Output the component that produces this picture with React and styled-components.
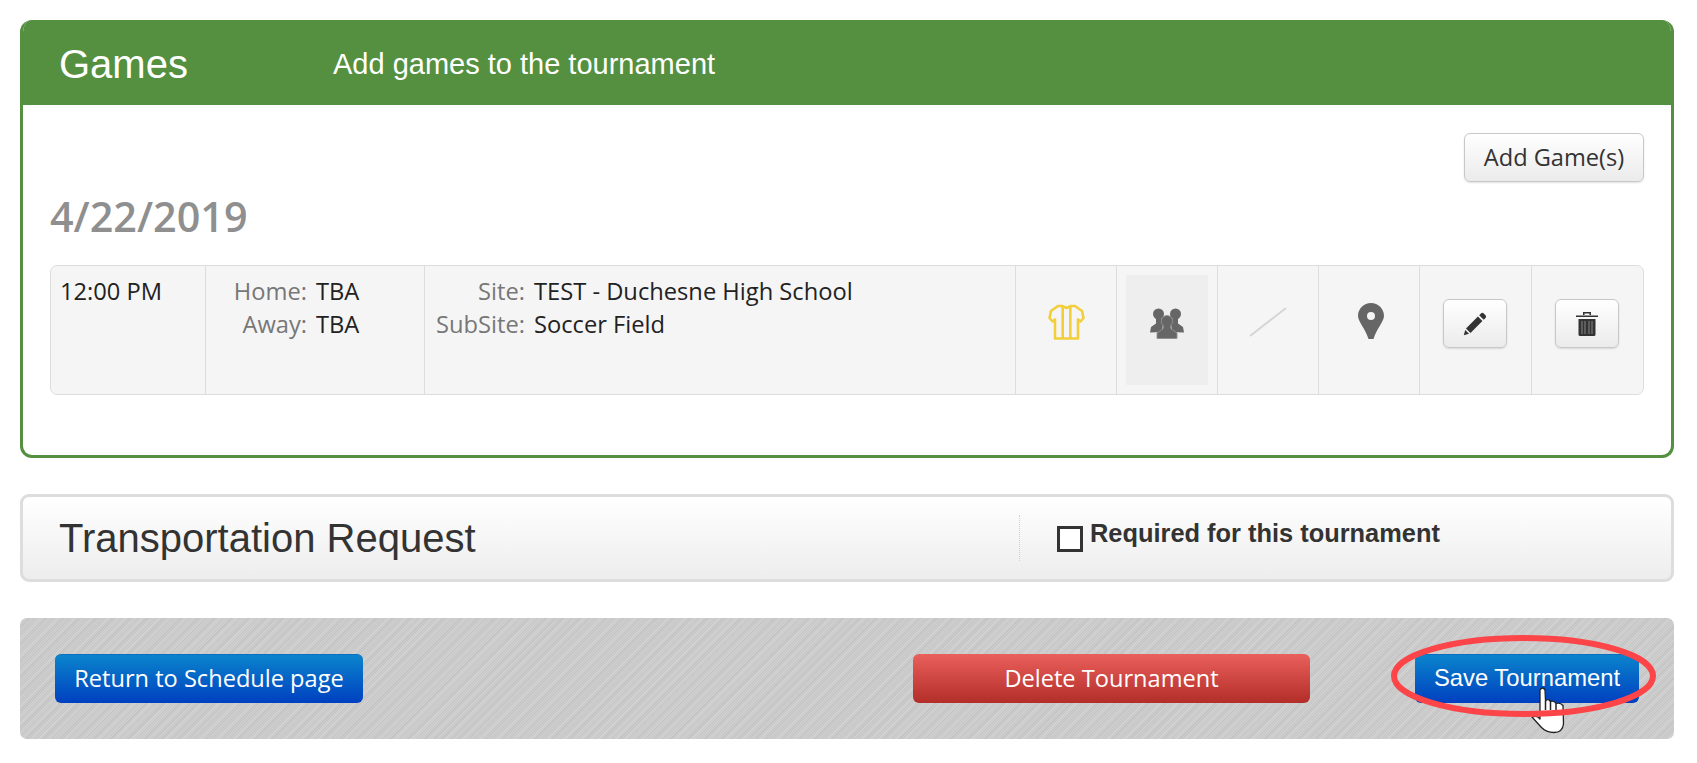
import React from 'react';
import styled, { createGlobalStyle } from 'styled-components';

const GlobalStyle = createGlobalStyle`
    html, body {
        margin: 0;
        padding: 0;
        background: #fff;
        font-family: "Open Sans", sans-serif;
    }
`;

const Page = styled.div`
    width: 1654px;
    padding: 20px 23px 24px 20px;
    display: flex;
    flex-direction: column;
    gap: 36px;
`;

const Panel = styled.section`
    border: 3px solid #54903f;
    border-top: 0;
    border-radius: 12px;
    overflow: hidden;
    height: 438px;
    box-sizing: border-box;
`;

const PanelHeader = styled.header`
    height: 85px;
    box-sizing: border-box;
    margin: 0 -3px;
    padding: 3px 0 0 39px;
    background: #54903f;
    color: #fff;
    display: flex;
    align-items: center;
    font-family: "Liberation Sans", Arial, sans-serif;
`;

const PanelTitle = styled.h2`
    width: 274px;
    margin: 0;
    font-size: 40px;
    font-weight: 400;
`;

const PanelSubtitle = styled.div`
    font-size: 29px;
`;

const PanelBody = styled.div`
    padding: 28px 27px 0 27px;
`;

const Toolbar = styled.div`
    display: flex;
    justify-content: flex-end;
`;

const GrayButton = styled.button`
    box-sizing: border-box;
    width: ${p => p.$width}px;
    height: 49px;
    padding: 0;
    display: flex;
    align-items: center;
    justify-content: center;
    border: 1px solid #c8c8c8;
    border-radius: 6px;
    background: linear-gradient(#ffffff, #ebebeb);
    box-shadow: 0 1px 2px rgba(0, 0, 0, 0.12);
    color: #333;
    font-family: "Open Sans", sans-serif;
    font-size: 23.6px;
`;

const AddButton = styled(GrayButton)`
    padding-bottom: 2px;
`;

const DateHeading = styled.h3`
    margin: 10px 0 25px;
    height: 48px;
    line-height: 48px;
    color: #8f8f8f;
    font-size: 41.3px;
    font-weight: 600;
`;

const GameRow = styled.div`
    height: 130px;
    box-sizing: border-box;
    display: grid;
    grid-template-columns: 155px 219px 591px 101px 101px 101px 101px 112px 1fr;
    background: #f5f5f5;
    border: 1px solid #ddd;
    border-radius: 7px;
    color: #222;
    font-size: 23.7px;
    line-height: 33px;
`;

const Cell = styled.div`
    box-sizing: border-box;
    padding-top: ${p => p.$top || 0}px;
    padding-left: ${p => p.$left || 0}px;
    padding-right: ${p => p.$right || 0}px;
    border-right: ${p => (p.$last ? '0' : '1px solid #ddd')};
    display: flex;
    justify-content: ${p => (p.$center ? 'center' : 'flex-start')};
    align-items: flex-start;
`;

const TimeCell = styled(Cell)`
    padding: 9px 0 0 9px;
`;

const Pairs = styled.div`
    padding-top: 9px;
    display: grid;
    grid-template-columns: ${p => p.$labelWidth}px auto;
    column-gap: 9px;
    align-content: start;
`;

const Label = styled.span`
    color: #777;
    text-align: right;
`;

const Shaded = styled.div`
    width: 82px;
    height: 110px;
    margin: 9px 1px 0 0;
    background: #eee;
    display: flex;
    justify-content: center;
    padding-top: 33px;
    box-sizing: border-box;
`;

const TransportBox = styled.section`
    height: 88px;
    box-sizing: border-box;
    display: flex;
    align-items: center;
    border: 3px solid #ddd;
    border-radius: 9px;
    background: linear-gradient(#ffffff, #ededed);
    color: #333;
    font-family: "Liberation Sans", Arial, sans-serif;
`;

const TransportTitle = styled.h2`
    box-sizing: border-box;
    width: 996px;
    margin: 0;
    padding-left: 36px;
    font-size: 40px;
    font-weight: 400;
`;

const RequiredArea = styled.div`
    height: 46px;
    padding-left: 37px;
    border-left: 1px dotted #cfcfcf;
    display: flex;
    align-items: flex-start;
    gap: 7px;
`;

const CheckBox = styled.span`
    box-sizing: border-box;
    width: 26px;
    height: 26px;
    margin-top: 11px;
    background: #fff;
    border: 3px solid #333;
`;

const RequiredLabel = styled.span`
    font-size: 25.4px;
    font-weight: 700;
    line-height: 32px;
    margin-top: 2px;
`;

const Footer = styled.footer`
    height: 121px;
    box-sizing: border-box;
    padding: 36px 35px;
    display: flex;
    align-items: flex-start;
    border-radius: 7px;
    background:
        repeating-linear-gradient(135deg, rgba(255, 255, 255, 0.07) 0 1px, rgba(0, 0, 0, 0.03) 1px 2px),
        repeating-linear-gradient(135deg, #c8c8c8 0, #d1d1d1 3px, #c8c8c8 6px);
`;

const ColorButton = styled.button`
    box-sizing: border-box;
    width: ${p => p.$width}px;
    height: 49px;
    padding: 0 0 2px;
    border: 0;
    border-radius: 6px;
    color: #fff;
    font-family: "Open Sans", sans-serif;
    font-size: 23.6px;
`;

const BlueButton = styled(ColorButton)`
    background: linear-gradient(#0a84cc, #0040c0);
    border-top: 1px solid #0a6fc0;
`;

const RedButton = styled(ColorButton)`
    margin-left: auto;
    background: linear-gradient(#ea5f5b, #b32e29);
`;

const SaveWrap = styled.div`
    position: relative;
    margin-left: 105px;
`;

const SaveButton = styled(BlueButton)`
    font-family: "Liberation Sans", Arial, sans-serif;
    font-size: 23.8px;
`;

const Ring = styled.svg`
    position: absolute;
    left: -24px;
    top: -19px;
    pointer-events: none;
`;

const HandCursor = styled.svg`
    position: absolute;
    left: 115px;
    top: 32px;
    pointer-events: none;
`;

const Jersey = () => (
    <svg width="37" height="37" viewBox="0 0 37 37" fill="none" stroke="#f2cf3a" strokeWidth="2.600">
        <path d="M7 35.500V16.500L4.500 18.500 1.500 15 3 8 10 3h4l4.500 2 4.500-2h4l7 5 1.500 7-3 3.500-2.500-2v19z" strokeLinejoin="round" />
        <path d="M14.700 3v32.500M22.300 3v32.500" />
    </svg>
);

const People = () => (
    <svg width="34" height="31" viewBox="0 0 34 31" fill="#666">
        <circle cx="8.500" cy="6" r="5.500" />
        <circle cx="25.500" cy="6" r="5.500" />
        <path d="M6 10h5l2 6-1 8-12 0.500 1-5.500 5-3.500zM28 10h-5l-2 6 1 8 12 0.500-1-5.500-5-3.500z" />
        <g stroke="#8e8e8e" strokeWidth="0.900">
            <path d="M17 7.500a5.800 5.800 0 0 1 3.500 10.400l0.500 3 6 4v5.600H7v-5.600l6-4 0.500-3A5.800 5.800 0 0 1 17 7.500z" />
        </g>
    </svg>
);

const Slash = () => (
    <svg width="38" height="30" viewBox="0 0 38 30">
        <path d="M1 29L37 1" stroke="#d6d6d6" strokeWidth="2" />
    </svg>
);

const Pin = () => (
    <svg width="26" height="36" viewBox="0 0 26 36">
        <path fill="#666" fillRule="evenodd" d="M13 0C5.800 0 0 5.800 0 13c0 5.500 7 12 10.500 23h5C19 25 26 18.500 26 13 26 5.800 20.200 0 13 0zm0 9a4 4 0 1 1 0 8 4 4 0 0 1 0-8z" />
    </svg>
);

const Pencil = () => (
    <svg width="24" height="24" viewBox="0 0 24 24" fill="#333">
        <path d="M18 1.500a2 2 0 0 1 2.800 0l1.700 1.700a2 2 0 0 1 0 2.800l-1.800 1.800-4.500-4.500zM14.900 4.500l4.500 4.500L7.500 21 3 16.500zM2.200 18l3.800 3.800L.8 23.200z" />
    </svg>
);

const Trash = () => (
    <svg width="22" height="25" viewBox="0 0 22 25" fill="#333">
        <path d="M7 4V1h8v3h-1.500V2.500h-5V4zM0 4.500h22V6H0z" />
        <path fillRule="evenodd" d="M2.500 8h17v15.500a1.500 1.500 0 0 1-1.500 1.500H4a1.500 1.500 0 0 1-1.500-1.500z" />
        <path d="M6 10v13M9 10v13M13 10v13M16 10v13" stroke="#888" strokeWidth="1" />
    </svg>
);

const Hand = () => (
    <HandCursor width="36" height="50" viewBox="0 0 36 50">
        <path fill="#fff" stroke="#222" strokeWidth="1.300" strokeLinejoin="round" d="M10 4Q12.500 0 15 4L15.500 15Q18 12 20.500 15.500Q24 14 26 17.500Q30 16 33 19.500L33.500 38Q32.500 46.500 24 46.500Q16 46.500 11 41L2 31Q7 29 10 33Z" />
        <path fill="none" stroke="#222" strokeWidth="1.500" d="M15.500 15v9M20.500 15.500v8.500M26 17.500v7" />
    </HandCursor>
);

const App = () => (
    <Page>
        <GlobalStyle />
        <Panel>
            <PanelHeader>
                <PanelTitle>Games</PanelTitle>
                <PanelSubtitle>Add games to the tournament</PanelSubtitle>
            </PanelHeader>
            <PanelBody>
                <Toolbar>
                    <AddButton $width={180}>Add Game(s)</AddButton>
                </Toolbar>
                <DateHeading>4/22/2019</DateHeading>
                <GameRow>
                    <TimeCell>12:00 PM</TimeCell>
                    <Cell>
                        <Pairs $labelWidth={101}>
                            <Label>Home:</Label><span>TBA</span>
                            <Label>Away:</Label><span>TBA</span>
                        </Pairs>
                    </Cell>
                    <Cell>
                        <Pairs $labelWidth={100}>
                            <Label>Site:</Label><span>TEST - Duchesne High School</span>
                            <Label>SubSite:</Label><span>Soccer Field</span>
                        </Pairs>
                    </Cell>
                    <Cell $center $top={37}><Jersey /></Cell>
                    <Cell $center><Shaded><People /></Shaded></Cell>
                    <Cell $center $top={41}><Slash /></Cell>
                    <Cell $center $top={37} $left={3}><Pin /></Cell>
                    <Cell $center $top={33} $right={2}>
                        <GrayButton $width={64}><Pencil /></GrayButton>
                    </Cell>
                    <Cell $center $last $top={33} $right={2}>
                        <GrayButton $width={64}><Trash /></GrayButton>
                    </Cell>
                </GameRow>
            </PanelBody>
        </Panel>
        <TransportBox>
            <TransportTitle>Transportation Request</TransportTitle>
            <RequiredArea>
                <CheckBox />
                <RequiredLabel>Required for this tournament</RequiredLabel>
            </RequiredArea>
        </TransportBox>
        <Footer>
            <BlueButton $width={308}>Return to Schedule page</BlueButton>
            <RedButton $width={397}>Delete Tournament</RedButton>
            <SaveWrap>
                <SaveButton $width={224}>Save Tournament</SaveButton>
                <Hand />
                <Ring width="265" height="82" viewBox="0 0 265 82">
                    <ellipse cx="132.500" cy="41" rx="129.500" ry="38" fill="none" stroke="#fb4548" strokeWidth="6" />
                </Ring>
            </SaveWrap>
        </Footer>
    </Page>
);

export default App;
